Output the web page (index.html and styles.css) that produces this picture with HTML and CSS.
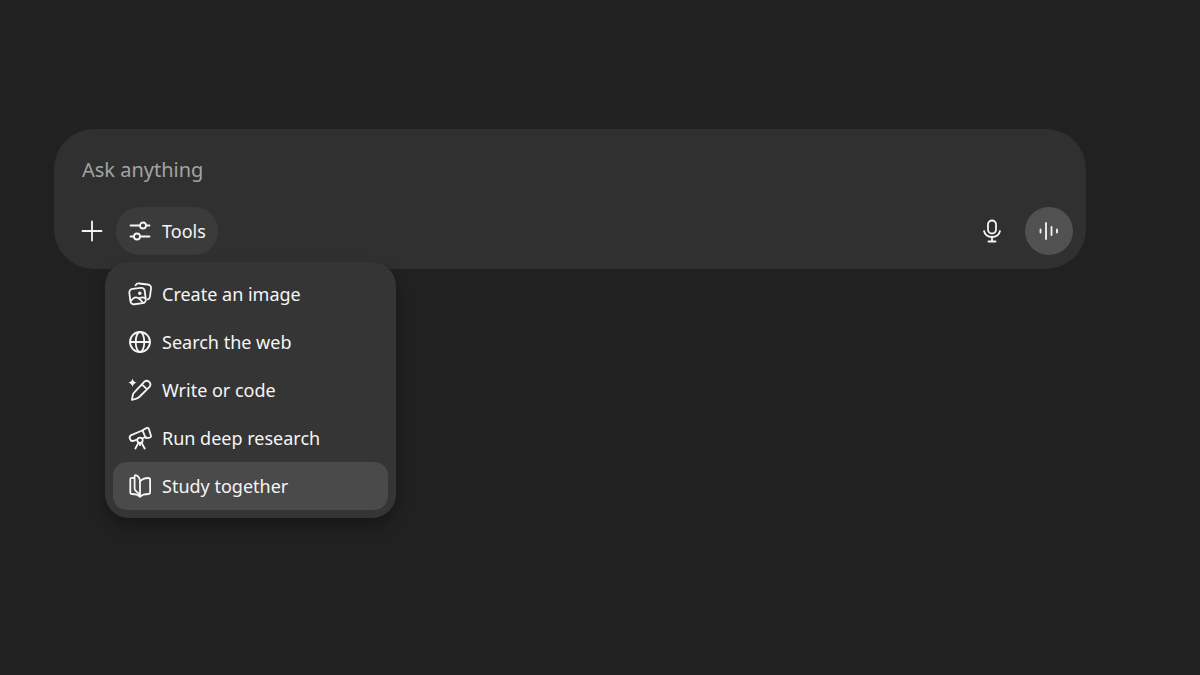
FILE: index.html
```html
<!DOCTYPE html>
<html lang="en">
<head>
<meta charset="utf-8">
<meta name="viewport" content="width=device-width, initial-scale=1">
<title>Ask anything</title>
<link rel="stylesheet" href="styles.css">
</head>
<body>
<main class="page">
  <form class="composer">
    <input class="prompt" type="text" placeholder="Ask anything" aria-label="Ask anything">
    <div class="toolbar">
      <button class="icon-button" type="button" aria-label="Add">
        <svg class="icon" viewBox="0 0 24 24"><path d="M12 2.500v19M2.500 12h19"/></svg>
      </button>
      <div class="tools">
        <button class="tools-button" type="button" aria-haspopup="menu" aria-expanded="true">
          <svg class="icon" viewBox="0 0 24 24"><path d="M2.500 6.500h9.500M18 6.500h3.500M2.500 17.500H6M12 17.500h9.500"/><circle cx="15" cy="6.500" r="3"/><circle cx="9" cy="17.500" r="3"/></svg>
          <span>Tools</span>
        </button>
        <div class="menu" role="menu">
          <button class="menu-item" type="button" role="menuitem">
            <svg class="icon" viewBox="0 0 24 24"><g transform="rotate(-7 9.500 14)"><rect x="1.800" y="6.300" width="15.500" height="15.500" rx="3.500"/><path d="M2.400 18c4-4.200 7.200-4.200 11.600 3.200M10.500 16.800c2.200-1.500 4-1.400 6.400.4"/></g><circle class="solid" cx="11.800" cy="11.200" r="1.700"/><path d="M7.600 3.300c.7-1.400 2-2 3.700-1.800l8.300 1c2.500.3 3.700 1.700 3.400 4l-1 8c-.2 1.600-1 2.500-2.200 2.900"/></svg>
            <span>Create an image</span>
          </button>
          <button class="menu-item" type="button" role="menuitem">
            <svg class="icon" viewBox="0 0 24 24"><circle cx="12" cy="12" r="10"/><ellipse cx="12" cy="12" rx="4.300" ry="10"/><path d="M2 12h20"/></svg>
            <span>Search the web</span>
          </button>
          <button class="menu-item" type="button" role="menuitem">
            <svg class="icon" viewBox="0 0 24 24"><path d="M3.900 21.800l.9-4.700c.2-1.100.7-2 1.500-2.800L16.200 3.900c3.500-3 8 1.500 5.300 5L11.300 19c-.8.800-1.700 1.300-2.800 1.600zM13.900 6.400l5.200 5"/><path class="solid" d="M4.500.6c.8 2.600 1.500 3.300 4.100 4.100-2.600.8-3.300 1.500-4.100 4.100C3.700 6.200 3 5.500.4 4.700 3 3.900 3.700 3.200 4.500.6z"/></svg>
            <span>Write or code</span>
          </button>
          <button class="menu-item" type="button" role="menuitem">
            <svg class="icon" viewBox="0 0 24 24"><path d="M15.400 4L3.300 9.100c-1.500.7-2 1.800-1.500 3.200l.4 1.100c.5 1.400 1.600 1.900 3.200 1.400l3.800-1.200M14.900 12l3.200-.9"/><path d="M15.300 3.800l3.100-1.700c1.200-.6 2.100-.2 2.500 1l2 6.300c.4 1.200-.1 2-1.300 2.200l-2.500.5c-1 .2-1.500-.2-1.900-1.200l-2.300-5.500c-.3-.8-.2-1.200.4-1.600z"/><circle cx="12" cy="14.300" r="2.700"/><path d="M10.500 16.700L7.400 22.500M13.500 16.700l3.200 5.800M12 17.200v2"/></svg>
            <span>Run deep research</span>
          </button>
          <button class="menu-item selected" type="button" role="menuitem">
            <svg class="icon" viewBox="0 0 24 24"><path d="M12 7.500C14 5 17 4 20.200 4c1.300 0 1.900.6 1.900 1.900v12.300c0 1.200-.6 1.800-1.900 1.800-3.400 0-6 .7-8.200 2.700-2.200-2-4.800-2.700-7.800-2.700-1.300 0-1.900-.6-1.900-1.800V5.700c0-1.300.6-2 1.900-1.900l2 .2"/><path d="M12 22.700V7.500c0-2.600-1-4.700-3.300-6.100-1.200-.7-2.100-.2-2.100 1.200v11.600c0 1.300.3 2 1.300 2.800 2.200 1.500 3.400 3.200 4.100 5.700z"/></svg>
            <span>Study together</span>
          </button>
        </div>
      </div>
      <button class="icon-button dictate" type="button" aria-label="Dictate">
        <svg class="icon" viewBox="0 0 24 24"><rect x="8" y="1.500" width="8" height="13" rx="4"/><path d="M4 12c1 4 4 6 8 6s7-2 8-6M12 18v4M8.500 22.500h7"/></svg>
      </button>
      <button class="voice" type="button" aria-label="Voice mode">
        <svg class="icon" viewBox="0 0 24 24"><path d="M3.500 10.500v3M9 4v16M14.500 8v8M20 10.500v3"/></svg>
      </button>
    </div>
  </form>
</main>
</body>
</html>
```
FILE: styles.css
```css
* {
  box-sizing: border-box;
}

body {
  margin: 0;
  background: #212121;
  color: #f5f5f5;
  font-family: "Segoe UI", "Noto Sans", sans-serif;
  font-size: 18px;
  line-height: 24px;
}

.page {
  min-height: 100vh;
  padding: 129px 114px 0 54px;
}

.composer {
  display: flex;
  flex-direction: column;
  gap: 20px;
  padding: 23px 13px 14px 14px;
  border-radius: 40px;
  background: #303030;
}

button,
input {
  border: 0;
  background: none;
  color: inherit;
  font: inherit;
}

button {
  display: flex;
  align-items: center;
  padding: 0;
  cursor: pointer;
}

.prompt {
  width: 100%;
  height: 35px;
  padding: 0 14px;
  outline: 0;
  font-size: 20px;
}

.prompt::placeholder {
  color: #a3a3a3;
  opacity: 1;
}

.toolbar {
  display: flex;
  align-items: center;
}

.icon {
  flex: none;
  width: 24px;
  height: 24px;
  fill: none;
  stroke: currentColor;
  stroke-width: 1.8;
  stroke-linecap: round;
  stroke-linejoin: round;
}

.solid {
  fill: currentColor;
  stroke: none;
}

.icon-button {
  justify-content: center;
  width: 48px;
  height: 48px;
}

.tools {
  position: relative;
}

.tools-button {
  gap: 10px;
  height: 48px;
  padding: 0 12px;
  border-radius: 24px;
  background: #3b3b3b;
}

.dictate {
  margin-left: auto;
  margin-right: 9px;
}

.voice {
  justify-content: center;
  width: 48px;
  height: 48px;
  border-radius: 50%;
  background: #515151;
}

.menu {
  position: absolute;
  top: 55px;
  left: -11px;
  width: 291px;
  padding: 8px;
  border-radius: 24px;
  background: #353535;
  box-shadow: 0 8px 16px rgba(0, 0, 0, 0.3);
}

.menu-item {
  gap: 10px;
  width: 100%;
  height: 48px;
  padding: 0 15px;
  border-radius: 14px;
  white-space: nowrap;
}

.selected {
  background: #4a4a4a;
}
```
